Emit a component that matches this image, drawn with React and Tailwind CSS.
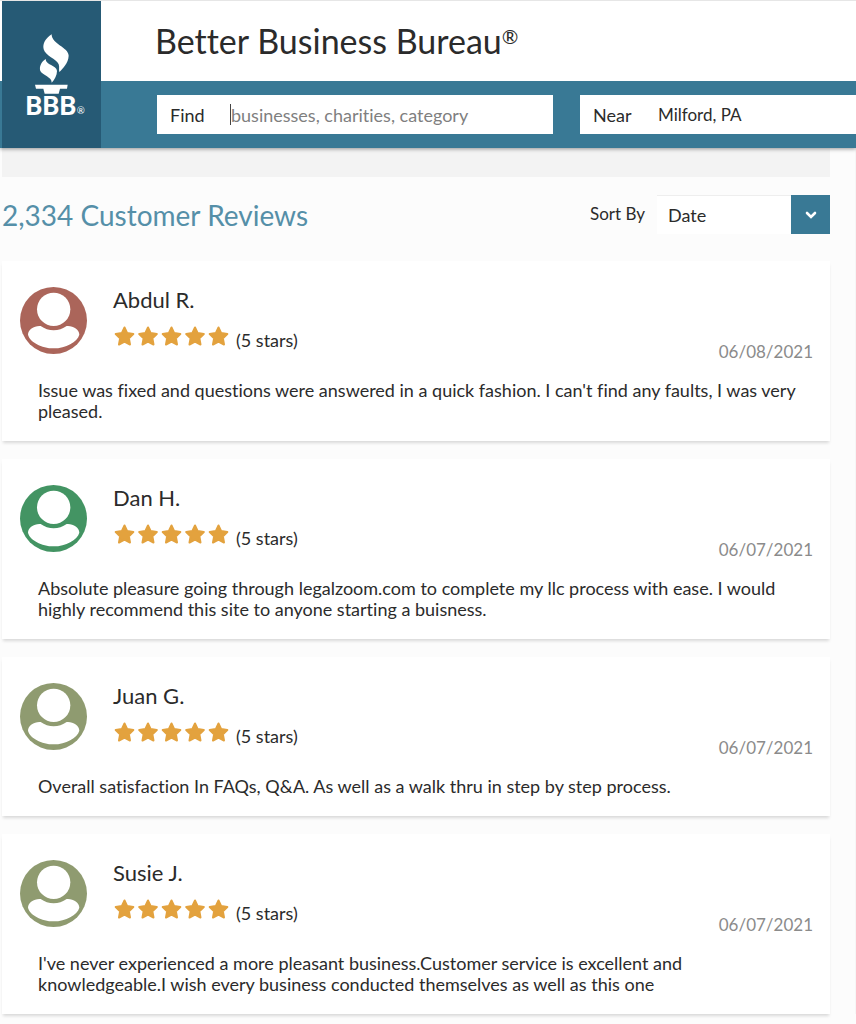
import { useState } from "react";

const reviews = [
  {
    id: 1,
    name: "Abdul R.",
    date: "06/08/2021",
    color: "text-[#ab655a]",
    text: "Issue was fixed and questions were answered in a quick fashion. I can't find any faults, I was very pleased.",
  },
  {
    id: 2,
    name: "Dan H.",
    date: "06/07/2021",
    color: "text-[#439463]",
    text: "Absolute pleasure going through legalzoom.com to complete my llc process with ease. I would highly recommend this site to anyone starting a buisness.",
  },
  {
    id: 3,
    name: "Juan G.",
    date: "06/07/2021",
    color: "text-[#8f9b70]",
    text: "Overall satisfaction In FAQs, Q&A. As well as a walk thru in step by step process.",
  },
  {
    id: 4,
    name: "Susie J.",
    date: "06/07/2021",
    color: "text-[#8f9b70]",
    text: "I've never experienced a more pleasant business.Customer service is excellent and knowledgeable.I wish every business conducted themselves as well as this one",
  },
];

const Logo = () => (
  <a
    href="#"
    aria-label="BBB home"
    className="absolute top-0 bottom-0 left-[2px] w-[99px] bg-[#265a75]"
  >
    <svg viewBox="6 3 297 441" className="h-full w-full" fill="#fff">
      <path d="M155 103C137 115 127 130 131 148C136 168 169 176 176 193C179 201 176 209 178 216C189 205 205 189 206 167C206 142 154 132 155 103Z" />
      <path d="M137 177C123 186 117 201 121 213C127 226 157 231 155 248C164 239 171 226 171 213C170 196 136 195 137 177Z" />
      <path d="M105 254H203L201 266H180L176 281H134L130 266H108Z" />
      <text x="76" y="344" fontSize="77" className="font-['Lato'] font-black">
        BBB
      </text>
      <text x="230" y="341" fontSize="29" className="font-['Lato']">
        ®
      </text>
    </svg>
  </a>
);

const Header = () => {
  const [find, setFind] = useState("");
  const [near, setNear] = useState("Milford, PA");

  return (
    <header className="relative z-10 border-t border-[#e6e6e6] bg-white shadow-[0_1px_4px_rgba(0,0,0,0.4)]">
      <div className="flex h-20 items-center pl-[155px]">
        <h1 className="text-[34px] leading-10">
          Better Business Bureau<sup className="top-[-10px] text-xl">®</sup>
        </h1>
      </div>
      <form
        className="flex h-[67px] items-center gap-[27px] bg-[#397995] pl-[157px]"
        onSubmit={(e) => e.preventDefault()}
      >
        <div className="flex h-[39px] min-w-0 flex-[396] items-center bg-white">
          <label htmlFor="find" className="w-[73px] shrink-0 pl-[13px]">
            Find
          </label>
          <span className="h-[21px] w-px bg-[#444]" />
          <input
            id="find"
            type="text"
            value={find}
            placeholder="businesses, charities, category"
            onChange={(e) => setFind(e.target.value)}
            className="h-full min-w-0 flex-1 outline-none placeholder:text-[#7f7f7f]"
          />
        </div>
        <div className="flex h-[39px] min-w-0 flex-[276] items-center bg-white">
          <label htmlFor="near" className="w-[78px] shrink-0 pl-[13px]">
            Near
          </label>
          <input
            id="near"
            type="text"
            value={near}
            onChange={(e) => setNear(e.target.value)}
            className="h-full min-w-0 flex-1 text-[17px] outline-none"
          />
        </div>
      </form>
      <Logo />
    </header>
  );
};

const Avatar = ({ color }) => (
  <svg viewBox="0 0 201 201" className={`size-[67px] shrink-0 ${color}`}>
    <circle cx="100.500" cy="100.500" r="100.500" fill="currentColor" />
    <circle cx="101" cy="67" r="50" fill="#fff" />
    <path
      d="M62 117C44 115 24 127 24 143C29 165 65 184 101 184C137 184 172 165 178 143C178 127 158 115 140 117C117 134 85 134 62 117Z"
      fill="#fff"
    />
  </svg>
);

const Stars = () => (
  <svg viewBox="0 0 117 23" className="h-[23px] w-[117px]">
    {[0, 1, 2, 3, 4].map((i) => (
      <path
        key={i}
        transform={`translate(${i * 23.5} 0)`}
        d="M11.500 2.500L14.200 8.100L20.300 9L15.900 13.300L17 19.500L11.500 16.600L6 19.500L7.100 13.300L2.700 9L8.800 8.100Z"
        fill="#e3a23e"
        stroke="#e3a23e"
        strokeWidth="2"
        strokeLinejoin="round"
      />
    ))}
  </svg>
);

const Review = ({ review }) => (
  <li className="bg-white pb-[19px] shadow-[0_3px_3px_-1px_rgba(0,0,0,0.14)]">
    <div className="flex h-[119px] pt-[26px] pr-[17px] pl-[18px]">
      <Avatar color={review.color} />
      <div className="ml-[26px] flex-1">
        <h3 className="text-[22px] leading-[26px]">{review.name}</h3>
        <div className="flex items-start pt-3">
          <Stars />
          <span className="pt-1 pl-[6px] leading-[22px]">(5 stars)</span>
        </div>
      </div>
      <time className="pt-[53px] text-[17px] leading-6 text-[#8b8b8b]">
        {review.date}
      </time>
    </div>
    <p className="pr-7 pl-9 leading-[21px]">{review.text}</p>
  </li>
);

const App = () => {
  const [sort, setSort] = useState("Date");

  return (
    <div className="min-h-screen bg-[#fcfcfc] font-['Lato',sans-serif] text-lg text-[#2b2b2b] [font-variant-ligatures:none]">
      <Header />
      <div className="flex">
        <main className="min-w-0 flex-1 pl-[2px]">
          <div className="h-[29px] bg-[#f3f3f3]" />
          <div className="flex items-center justify-between pt-[18px] pb-[27px]">
            <h2 className="text-[28px] leading-9 text-[#558fa8]">
              2,334 Customer Reviews
            </h2>
            <div className="flex items-center gap-3">
              <label htmlFor="sort" className="text-[17px]">
                Sort By
              </label>
              <div className="relative h-[39px] w-[173px]">
                <select
                  id="sort"
                  value={sort}
                  onChange={(e) => setSort(e.target.value)}
                  className="h-full w-full appearance-none border-t border-[#eeeeee] bg-white pl-[11px] outline-none"
                >
                  <option>Date</option>
                  <option>Rating</option>
                </select>
                <span className="pointer-events-none absolute top-0 right-0 flex h-full w-[39px] items-center justify-center bg-[#397995]">
                  <svg viewBox="0 0 12 8" className="h-2 w-3" fill="none">
                    <path
                      d="M2 2L6 6L10 2"
                      stroke="#fff"
                      strokeWidth="2.600"
                      strokeLinecap="round"
                    />
                  </svg>
                </span>
              </div>
            </div>
          </div>
          <ul className="flex flex-col gap-[18px]">
            {reviews.map((review) => (
              <Review key={review.id} review={review} />
            ))}
          </ul>
        </main>
        <aside className="ml-[25px] w-px bg-[#f6f6f6]" />
      </div>
    </div>
  );
};

export default App;
